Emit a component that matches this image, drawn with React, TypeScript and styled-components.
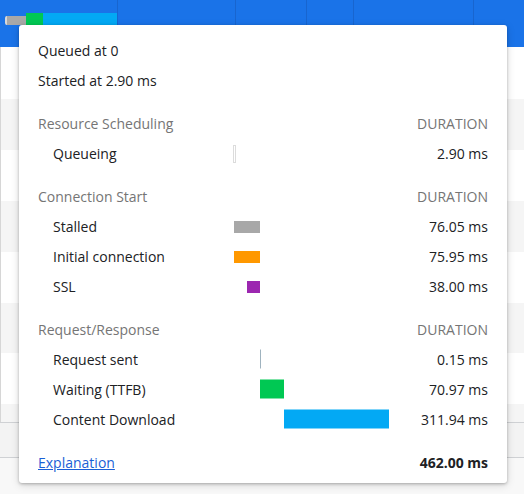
import styled, { createGlobalStyle } from "styled-components";

const GlobalStyle = createGlobalStyle`
  html, body {
    margin: 0;
    padding: 0;
    background: #fff;
  }
  body {
    font-family: "Open Sans", "Noto Sans", sans-serif;
    color: #202124;
  }
`;

const TOTAL = 462;

type Phase = {
  label: string;
  start: number;
  dur: number;
  color: string;
  height: number;
  outline?: boolean;
  minWidth?: number;
};

type Section = {
  title: string;
  phases: Phase[];
};

const sections: Section[] = [
  {
    title: "Resource Scheduling",
    phases: [
      { label: "Queueing", start: 0, dur: 2.9, color: "#fff", height: 18, outline: true, minWidth: 3 },
    ],
  },
  {
    title: "Connection Start",
    phases: [
      { label: "Stalled", start: 2.9, dur: 76.05, color: "#a8a8a8", height: 12 },
      { label: "Initial connection", start: 2.9, dur: 75.95, color: "#ff9800", height: 12 },
      { label: "SSL", start: 40.85, dur: 38.0, color: "#9c27b0", height: 12 },
    ],
  },
  {
    title: "Request/Response",
    phases: [
      { label: "Request sent", start: 78.95, dur: 0.15, color: "#9fb3bf", height: 19, minWidth: 1 },
      { label: "Waiting (TTFB)", start: 79.1, dur: 70.97, color: "#00c853", height: 19 },
      { label: "Content Download", start: 150.07, dur: 311.94, color: "#03a9f4", height: 19 },
    ],
  },
];

const Page = styled.div`
  position: relative;
  width: 524px;
  height: 494px;
  overflow: hidden;
  background: #f8f8f8;
`;

const Table = styled.div`
  display: flex;
  flex-direction: column;
`;

const SelectedRow = styled.div`
  height: 47px;
  display: grid;
  grid-template-columns: 118px 118px 71px 47px 120px 1fr;
  background: #1a73e8;
`;

const Cell = styled.div`
  border-right: 1px solid #1865cf;
  &:last-child {
    border-right: none;
  }
`;

const Waterfall = styled.div`
  display: flex;
  align-items: flex-start;
  padding: 13px 0 0 5px;
`;

const Segment = styled.div<{ $color: string; $w: number; $top?: number }>`
  width: ${(p) => p.$w}px;
  height: ${(p) => 12 - (p.$top ?? 0)}px;
  margin-top: ${(p) => p.$top ?? 0}px;
  background: ${(p) => p.$color};
`;

const StalledSegment = styled(Segment)`
  border-left: 2px solid #d8d8d8;
  border-radius: 2px 0 0 2px;
`;

const DataRow = styled.div<{ $striped?: boolean; $h?: number }>`
  height: ${(p) => p.$h ?? 51}px;
  background: ${(p) => (p.$striped ? "#f5f5f5" : "#fff")};
  border-left: 1px solid #d6d6d6;
`;

const StatusBar = styled.div`
  height: 34px;
  background: #f3f3f3;
  border-top: 1px solid #cfd1d4;
  border-bottom: 1px solid #cfd1d4;
`;

const Popup = styled.div`
  position: absolute;
  left: 19px;
  top: 25px;
  width: 488px;
  height: 458px;
  box-sizing: border-box;
  padding: 11px 19px 6px 19px;
  background: #fff;
  border-radius: 3px;
  box-shadow: 0 1px 3px rgba(0, 0, 0, 0.25), 0 2px 8px rgba(0, 0, 0, 0.15);
  font-size: 14px;
`;

const InfoLine = styled.div`
  height: 30px;
  line-height: 30px;
`;

const Group = styled.div`
  margin-top: 12.75px;
`;

const TimingRow = styled.div`
  display: grid;
  grid-template-columns: 195px 156px 1fr;
  align-items: center;
  height: 30px;
`;

const GroupTitle = styled.div`
  color: #757575;
  grid-column: 1 / 3;
`;

const Label = styled.div`
  padding-left: 15px;
`;

const Duration = styled.div<{ $muted?: boolean; $bold?: boolean }>`
  text-align: right;
  color: ${(p) => (p.$muted ? "#757575" : "#202124")};
  font-weight: ${(p) => (p.$bold ? 700 : 400)};
`;

const Track = styled.div`
  position: relative;
  height: 30px;
`;

const Bar = styled.div<{ $color: string; $h: number; $outline?: boolean }>`
  position: absolute;
  top: 50%;
  height: ${(p) => p.$h}px;
  transform: translateY(-50%);
  box-sizing: border-box;
  background: ${(p) => p.$color};
  border: ${(p) => (p.$outline ? "1px solid #dcdcdc" : "none")};
`;

const Footer = styled.div`
  display: flex;
  justify-content: space-between;
  align-items: center;
  height: 30px;
`;

const Link = styled.a`
  color: #1a5fd6;
  text-decoration: underline;
  cursor: pointer;
`;

function TimingBar({ phase }: { phase: Phase }) {
  const left = (phase.start / TOTAL) * 156;
  const width = Math.max((phase.dur / TOTAL) * 156, phase.minWidth ?? 0);
  return (
    <Bar
      $color={phase.color}
      $h={phase.height}
      $outline={phase.outline}
      style={{ left: `${left}px`, width: `${width}px` }}
    />
  );
}

export default function App() {
  return (
    <Page>
      <GlobalStyle />
      <Table>
        <SelectedRow>
          <Cell>
            <Waterfall>
              <StalledSegment $color="#a8a8a8" $w={19} $top={3} />
              <Segment $color="#00c853" $w={17} />
              <Segment $color="#03a9f4" $w={75} />
            </Waterfall>
          </Cell>
          <Cell />
          <Cell />
          <Cell />
          <Cell />
          <Cell />
        </SelectedRow>
        <DataRow $h={52} />
        <DataRow $striped />
        <DataRow />
        <DataRow $striped />
        <DataRow />
        <DataRow $striped $h={50} />
        <DataRow />
        <DataRow $striped $h={18} />
        <StatusBar />
      </Table>

      <Popup>
        <InfoLine>Queued at 0</InfoLine>
        <InfoLine>Started at 2.90 ms</InfoLine>
        {sections.map((s) => (
          <Group key={s.title}>
            <TimingRow>
              <GroupTitle>{s.title}</GroupTitle>
              <Duration $muted>DURATION</Duration>
            </TimingRow>
            {s.phases.map((ph) => (
              <TimingRow key={ph.label}>
                <Label>{ph.label}</Label>
                <Track>
                  <TimingBar phase={ph} />
                </Track>
                <Duration>{ph.dur.toFixed(2)} ms</Duration>
              </TimingRow>
            ))}
          </Group>
        ))}
        <Group>
          <Footer>
            <Link>Explanation</Link>
            <Duration $bold>462.00 ms</Duration>
          </Footer>
        </Group>
      </Popup>
    </Page>
  );
}
